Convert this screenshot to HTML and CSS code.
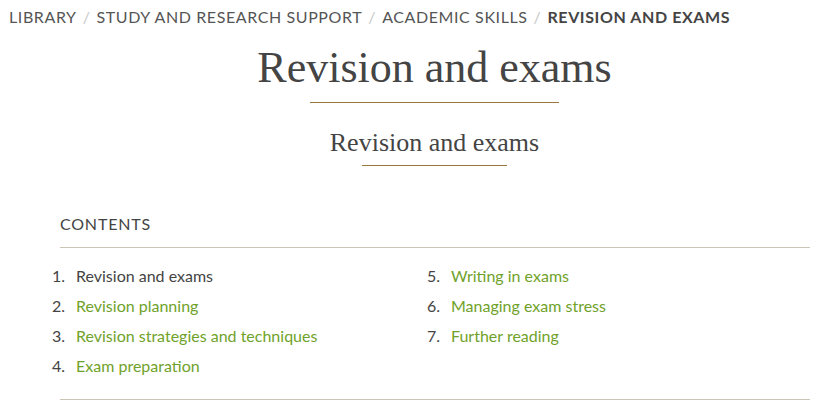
FILE: index.html
```html
<!DOCTYPE html>
<html lang="en">
<head>
<meta charset="utf-8">
<title>Revision and exams</title>
<link rel="stylesheet" href="styles.css">
</head>
<body>
<nav class="crumbs">
  <a href="#">LIBRARY</a><span class="sep">/</span><a href="#">STUDY AND RESEARCH SUPPORT</a><span class="sep">/</span><a href="#">ACADEMIC SKILLS</a><span class="sep">/</span><span class="current">REVISION AND EXAMS</span>
</nav>
<header class="head">
  <h1 class="title">Revision and exams</h1>
  <h2 class="subtitle">Revision and exams</h2>
</header>
<section class="contents">
  <h3 class="contents-label">CONTENTS</h3>
  <ol class="toc">
    <li class="toc-item"><span class="num">1.</span><span class="cur">Revision and exams</span></li>
    <li class="toc-item"><span class="num">5.</span><a href="#">Writing in exams</a></li>
    <li class="toc-item"><span class="num">2.</span><a href="#">Revision planning</a></li>
    <li class="toc-item"><span class="num">6.</span><a href="#">Managing exam stress</a></li>
    <li class="toc-item"><span class="num">3.</span><a href="#">Revision strategies and techniques</a></li>
    <li class="toc-item"><span class="num">7.</span><a href="#">Further reading</a></li>
    <li class="toc-item"><span class="num">4.</span><a href="#">Exam preparation</a></li>
  </ol>
</section>
</body>
</html>
```
FILE: styles.css
```css
html, body {
  margin: 0;
  padding: 0;
  background: #fff;
}
body {
  font-family: Lato, "Open Sans", sans-serif;
  color: #444;
}
a { text-decoration: none; color: inherit; }

.crumbs {
  padding: 7px 0 0 9px;
  font-size: 16px;
  line-height: 20px;
  letter-spacing: 0.6px;
  color: #555;
}
.crumbs .sep {
  color: #c8c8c8;
  margin: 0 6px;
}
.crumbs .current {
  font-weight: 700;
  color: #444;
}

.head {
  display: flex;
  flex-direction: column;
  align-items: center;
  padding-left: 36px;
}
.title {
  margin: 15px 0 0;
  font-family: "Liberation Serif", "Times New Roman", serif;
  font-weight: 400;
  font-size: 44px;
  line-height: 52px;
  color: #444;
  display: flex;
  flex-direction: column;
  align-items: center;
}
.title::after {
  content: "";
  width: 249px;
  height: 1px;
  background: #9a7a3c;
  margin-top: 8px;
}
.subtitle {
  margin: 25px 0 0;
  font-family: "Liberation Serif", "Times New Roman", serif;
  font-weight: 400;
  font-size: 26px;
  line-height: 30px;
  color: #444;
  display: flex;
  flex-direction: column;
  align-items: center;
}
.subtitle::after {
  content: "";
  width: 145px;
  height: 1px;
  background: #9a7a3c;
  margin-top: 7px;
}

.contents {
  margin: 48px 23px 0 60px;
  border-bottom: 1px solid #ccc5b5;
  padding-bottom: 18px;
}
.contents-label {
  margin: 0;
  font-weight: 400;
  font-size: 16px;
  line-height: 20px;
  letter-spacing: 0.8px;
  color: #444;
  padding-bottom: 13px;
  border-bottom: 1px solid #ccc5b5;
}
.toc {
  list-style: none;
  margin: 13px 0 0 -8px;
  padding: 0;
  display: grid;
  grid-template-columns: 375px 375px;
  font-size: 16px;
  line-height: 30px;
}
.toc-item {
  display: flex;
}
.num {
  width: 24px;
  color: #444;
}
.cur { color: #444; }
.toc a { color: #6fa22a; }
```
